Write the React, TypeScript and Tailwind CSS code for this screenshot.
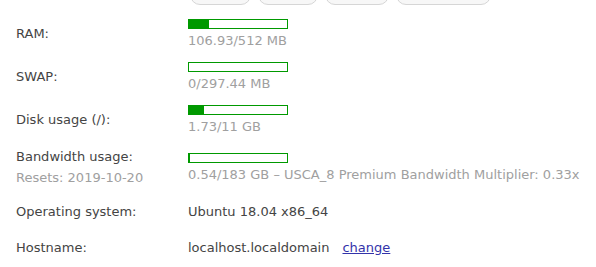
import React from "react";

type Row = {
  label: string;
  sub?: string;
  used: number;
  total: number;
  text: string;
};

const rows: Row[] = [
  { label: "RAM:", used: 106.93, total: 512, text: "106.93/512 MB" },
  { label: "SWAP:", used: 0, total: 297.44, text: "0/297.44 MB" },
  { label: "Disk usage (/):", used: 1.73, total: 11, text: "1.73/11 GB" },
  {
    label: "Bandwidth usage:",
    sub: "Resets: 2019-10-20",
    used: 0.54,
    total: 183,
    text: "0.54/183 GB – USCA_8 Premium Bandwidth Multiplier: 0.33x",
  },
];

function Bar({ used, total }: { used: number; total: number }) {
  const pct = (used / total) * 100;
  return (
    <div className="h-[10px] w-[100px] border border-[#009900] bg-white">
      <div className="h-full bg-[#009900]" style={{ width: `${pct}%` }} />
    </div>
  );
}

export default function App() {
  return (
    <div className="min-h-screen bg-white text-[13px] text-[#444] [font-family:'DejaVu_Sans',Verdana,sans-serif]">
      {/* action buttons, mostly scrolled out of view */}
      <div className="-mt-[24px] flex gap-[7px] pl-[190px]">
        {["Start", "Stop", "Restart", "Backup"].map((b, i) => (
          <div
            key={b}
            className={
              "flex h-[29px] items-center justify-center rounded-[10px] border border-[#d6d6d6] bg-[#f7f7f7] " +
              ["w-[61px]", "w-[60px]", "w-[64px]", "w-[95px]"][i]
            }
          >
            {b}
          </div>
        ))}
      </div>

      <div className="pt-[7px]">
        {rows.map((r) => (
          <div
            key={r.label}
            className={"flex items-center pb-[7px] " + (r.sub ? "pt-[5px]" : "pt-[7px]")}
          >
            <div className="w-[188px] pl-[16px] leading-[21px]">
              <div>{r.label}</div>
              {r.sub && <div className="text-[#a0a0a0]">{r.sub}</div>}
            </div>
            <div className="flex flex-col gap-[4px]">
              <Bar used={r.used} total={r.total} />
              <div className="leading-[15px] text-[#a0a0a0]">{r.text}</div>
            </div>
          </div>
        ))}

        <div className="flex items-center pb-[7px] pt-[7px] leading-[20px]">
          <div className="w-[188px] pl-[16px]">Operating system:</div>
          <div>Ubuntu 18.04 x86_64</div>
        </div>
        <div className="flex items-center pb-[7px] pt-[9px] leading-[20px]">
          <div className="w-[188px] pl-[16px]">Hostname:</div>
          <div className="flex gap-[13px]">
            <span>localhost.localdomain</span>
            <a href="#" className="text-[#3333aa] underline">
              change
            </a>
          </div>
        </div>
      </div>
    </div>
  );
}
